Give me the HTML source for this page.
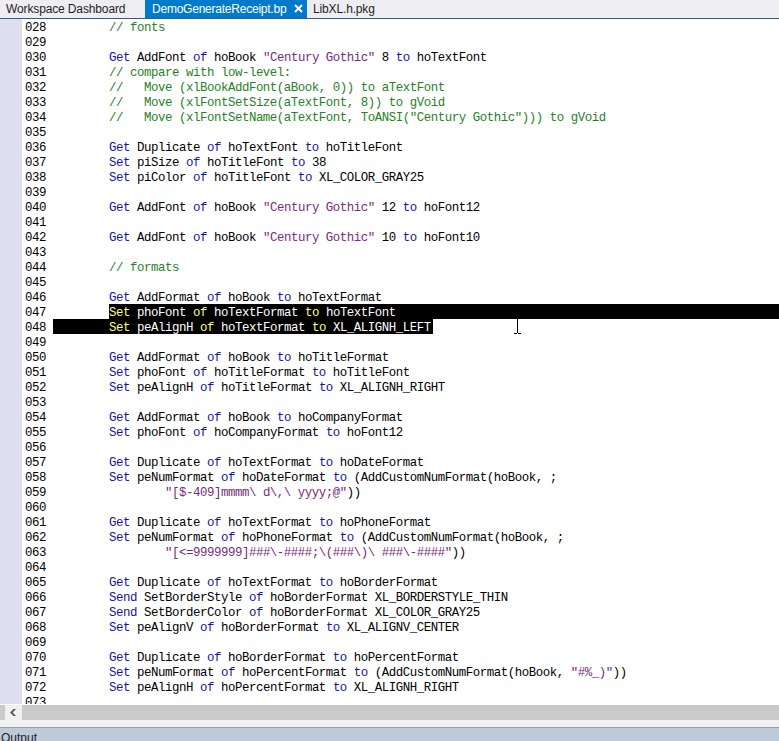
<!DOCTYPE html>
<html><head><meta charset="utf-8">
<style>
*{margin:0;padding:0;box-sizing:border-box}
html,body{width:779px;height:741px;overflow:hidden;background:#fff}
body{position:relative;font-family:"Liberation Sans",sans-serif}
#tabs{position:absolute;left:0;top:0;width:779px;height:18px;background:#EEEEF2}
#tabline{position:absolute;left:0;top:18px;width:779px;height:1px;background:#2f6184}
.tab{position:absolute;top:0;height:18px;font-size:12px;line-height:18px;color:#1E1E1E;white-space:nowrap}
#t2{left:145px;width:162px;background:#007ACC;color:#fff}
#ed{position:absolute;left:0;top:19px;width:779px;height:685px;overflow:hidden;background:#fff}
#gut{position:absolute;left:0;top:0;width:22px;height:685px;background:#DEDFEE}
#code{position:absolute;left:0;top:-19px;width:779px;height:800px}
.ln,.cd{position:absolute;height:15px;font-family:"Liberation Mono",monospace;font-size:12.4px;letter-spacing:-0.44px;line-height:15px;white-space:pre;color:#000}
.ln{left:25px;margin-top:2px}
.cd{left:53px;margin-top:2px}
i{font-style:normal}
.k{color:#1414a4}.s{color:#7a2a7a}.c{color:#258225}
.sel{position:absolute;background:#000;height:15px}
.inv{color:#fff}.inv .k{color:#FFFF7F}
#ibeam{position:absolute;left:514px;top:316px;width:7px;height:18px}
#sb{position:absolute;left:0;top:705px;width:779px;height:22px;background:#F0F0F0}
#sbline{position:absolute;left:0;top:727px;width:779px;height:1px;background:#9a9a9a}
#out{position:absolute;left:0;top:728px;width:779px;height:13px;background:#BEC9DA;overflow:hidden}
</style></head><body>
<div id="tabs">
 <div class="tab" style="left:6px;letter-spacing:-0.13px">Workspace Dashboard</div>
 <div class="tab" id="t2"><span style="position:absolute;left:7px;letter-spacing:-0.23px">DemoGenerateReceipt.bp</span>
  <svg style="position:absolute;left:149px;top:4px" width="9" height="9" viewBox="0 0 9 9"><path d="M1 1L8 8M8 1L1 8" stroke="#fff" stroke-width="2"/></svg></div>
 <div class="tab" style="left:313px;letter-spacing:-0.15px">LibXL.h.pkg</div>
</div>
<div id="tabline"></div>
<div id="ed">
 <div id="gut"></div>
 <div id="code">
<div class="ln" style="top:19px">028</div>
<div class="cd" style="top:19px">        <i class="c">// fonts</i></div>
<div class="ln" style="top:34px">029</div>
<div class="ln" style="top:49px">030</div>
<div class="cd" style="top:49px">        <i class="k">Get</i> AddFont <i class="k">of</i> hoBook <i class="s">&quot;Century Gothic&quot;</i> 8 <i class="k">to</i> hoTextFont</div>
<div class="ln" style="top:64px">031</div>
<div class="cd" style="top:64px">        <i class="c">// compare with low-level:</i></div>
<div class="ln" style="top:79px">032</div>
<div class="cd" style="top:79px">        <i class="c">//   Move (xlBookAddFont(aBook, 0)) to aTextFont</i></div>
<div class="ln" style="top:94px">033</div>
<div class="cd" style="top:94px">        <i class="c">//   Move (xlFontSetSize(aTextFont, 8)) to gVoid</i></div>
<div class="ln" style="top:109px">034</div>
<div class="cd" style="top:109px">        <i class="c">//   Move (xlFontSetName(aTextFont, ToANSI(&quot;Century Gothic&quot;))) to gVoid</i></div>
<div class="ln" style="top:124px">035</div>
<div class="ln" style="top:139px">036</div>
<div class="cd" style="top:139px">        <i class="k">Get</i> Duplicate <i class="k">of</i> hoTextFont <i class="k">to</i> hoTitleFont</div>
<div class="ln" style="top:154px">037</div>
<div class="cd" style="top:154px">        <i class="k">Set</i> piSize <i class="k">of</i> hoTitleFont <i class="k">to</i> 38</div>
<div class="ln" style="top:169px">038</div>
<div class="cd" style="top:169px">        <i class="k">Set</i> piColor <i class="k">of</i> hoTitleFont <i class="k">to</i> XL_COLOR_GRAY25</div>
<div class="ln" style="top:184px">039</div>
<div class="ln" style="top:199px">040</div>
<div class="cd" style="top:199px">        <i class="k">Get</i> AddFont <i class="k">of</i> hoBook <i class="s">&quot;Century Gothic&quot;</i> 12 <i class="k">to</i> hoFont12</div>
<div class="ln" style="top:214px">041</div>
<div class="ln" style="top:229px">042</div>
<div class="cd" style="top:229px">        <i class="k">Get</i> AddFont <i class="k">of</i> hoBook <i class="s">&quot;Century Gothic&quot;</i> 10 <i class="k">to</i> hoFont10</div>
<div class="ln" style="top:244px">043</div>
<div class="ln" style="top:259px">044</div>
<div class="cd" style="top:259px">        <i class="c">// formats</i></div>
<div class="ln" style="top:274px">045</div>
<div class="ln" style="top:289px">046</div>
<div class="cd" style="top:289px">        <i class="k">Get</i> AddFormat <i class="k">of</i> hoBook <i class="k">to</i> hoTextFormat</div>
<div class="ln" style="top:304px">047</div>
<div class="sel" style="top:304px;left:109px;width:670px"></div>
<div class="cd inv" style="top:304px">        <i class="k">Set</i> phoFont <i class="k">of</i> hoTextFormat <i class="k">to</i> hoTextFont</div>
<div class="ln" style="top:319px">048</div>
<div class="sel" style="top:319px;left:53px;width:380px"></div>
<div class="cd inv" style="top:319px">        <i class="k">Set</i> peAlignH <i class="k">of</i> hoTextFormat <i class="k">to</i> XL_ALIGNH_LEFT</div>
<div class="ln" style="top:334px">049</div>
<div class="ln" style="top:349px">050</div>
<div class="cd" style="top:349px">        <i class="k">Get</i> AddFormat <i class="k">of</i> hoBook <i class="k">to</i> hoTitleFormat</div>
<div class="ln" style="top:364px">051</div>
<div class="cd" style="top:364px">        <i class="k">Set</i> phoFont <i class="k">of</i> hoTitleFormat <i class="k">to</i> hoTitleFont</div>
<div class="ln" style="top:379px">052</div>
<div class="cd" style="top:379px">        <i class="k">Set</i> peAlignH <i class="k">of</i> hoTitleFormat <i class="k">to</i> XL_ALIGNH_RIGHT</div>
<div class="ln" style="top:394px">053</div>
<div class="ln" style="top:409px">054</div>
<div class="cd" style="top:409px">        <i class="k">Get</i> AddFormat <i class="k">of</i> hoBook <i class="k">to</i> hoCompanyFormat</div>
<div class="ln" style="top:424px">055</div>
<div class="cd" style="top:424px">        <i class="k">Set</i> phoFont <i class="k">of</i> hoCompanyFormat <i class="k">to</i> hoFont12</div>
<div class="ln" style="top:439px">056</div>
<div class="ln" style="top:454px">057</div>
<div class="cd" style="top:454px">        <i class="k">Get</i> Duplicate <i class="k">of</i> hoTextFormat <i class="k">to</i> hoDateFormat</div>
<div class="ln" style="top:469px">058</div>
<div class="cd" style="top:469px">        <i class="k">Set</i> peNumFormat <i class="k">of</i> hoDateFormat <i class="k">to</i> (AddCustomNumFormat(hoBook, ;</div>
<div class="ln" style="top:484px">059</div>
<div class="cd" style="top:484px">                <i class="s">&quot;[$-409]mmmm\ d\,\ yyyy;@&quot;</i>))</div>
<div class="ln" style="top:499px">060</div>
<div class="ln" style="top:514px">061</div>
<div class="cd" style="top:514px">        <i class="k">Get</i> Duplicate <i class="k">of</i> hoTextFormat <i class="k">to</i> hoPhoneFormat</div>
<div class="ln" style="top:529px">062</div>
<div class="cd" style="top:529px">        <i class="k">Set</i> peNumFormat <i class="k">of</i> hoPhoneFormat <i class="k">to</i> (AddCustomNumFormat(hoBook, ;</div>
<div class="ln" style="top:544px">063</div>
<div class="cd" style="top:544px">                <i class="s">&quot;[&lt;=9999999]###\-####;\(###\)\ ###\-####&quot;</i>))</div>
<div class="ln" style="top:559px">064</div>
<div class="ln" style="top:574px">065</div>
<div class="cd" style="top:574px">        <i class="k">Get</i> Duplicate <i class="k">of</i> hoTextFormat <i class="k">to</i> hoBorderFormat</div>
<div class="ln" style="top:589px">066</div>
<div class="cd" style="top:589px">        <i class="k">Send</i> SetBorderStyle <i class="k">of</i> hoBorderFormat XL_BORDERSTYLE_THIN</div>
<div class="ln" style="top:604px">067</div>
<div class="cd" style="top:604px">        <i class="k">Send</i> SetBorderColor <i class="k">of</i> hoBorderFormat XL_COLOR_GRAY25</div>
<div class="ln" style="top:619px">068</div>
<div class="cd" style="top:619px">        <i class="k">Set</i> peAlignV <i class="k">of</i> hoBorderFormat <i class="k">to</i> XL_ALIGNV_CENTER</div>
<div class="ln" style="top:634px">069</div>
<div class="ln" style="top:649px">070</div>
<div class="cd" style="top:649px">        <i class="k">Get</i> Duplicate <i class="k">of</i> hoBorderFormat <i class="k">to</i> hoPercentFormat</div>
<div class="ln" style="top:664px">071</div>
<div class="cd" style="top:664px">        <i class="k">Set</i> peNumFormat <i class="k">of</i> hoPercentFormat <i class="k">to</i> (AddCustomNumFormat(hoBook, <i class="s">&quot;#%_)&quot;</i>))</div>
<div class="ln" style="top:679px">072</div>
<div class="cd" style="top:679px">        <i class="k">Set</i> peAlignH <i class="k">of</i> hoPercentFormat <i class="k">to</i> XL_ALIGNH_RIGHT</div>
<div class="ln" style="top:694px">073</div>
 </div>
</div>
<svg id="ibeam" width="7" height="18" viewBox="0 0 7 18"><path d="M3.5 0V17M0 17.5H3M4 17.5H7" stroke="#000" stroke-width="1"/></svg>
<div id="sb">
 <div style="position:absolute;left:0;top:0;width:5px;height:15px;background:#CACACA"></div>
 <div style="position:absolute;left:22px;top:0;width:757px;height:15px;background:#CACACA"></div>
 <svg style="position:absolute;left:0;top:0" width="22" height="15" viewBox="0 0 22 15"><path d="M13.5 4H16L12.6 7.5L16 11H13.5L10 7.5Z" fill="#555"/></svg>
</div>
<div id="sbline"></div>
<div id="out"><div style="position:absolute;left:1px;top:3px;font-size:12px;line-height:14px;color:#1E1E1E">Output</div></div>
</body></html>
